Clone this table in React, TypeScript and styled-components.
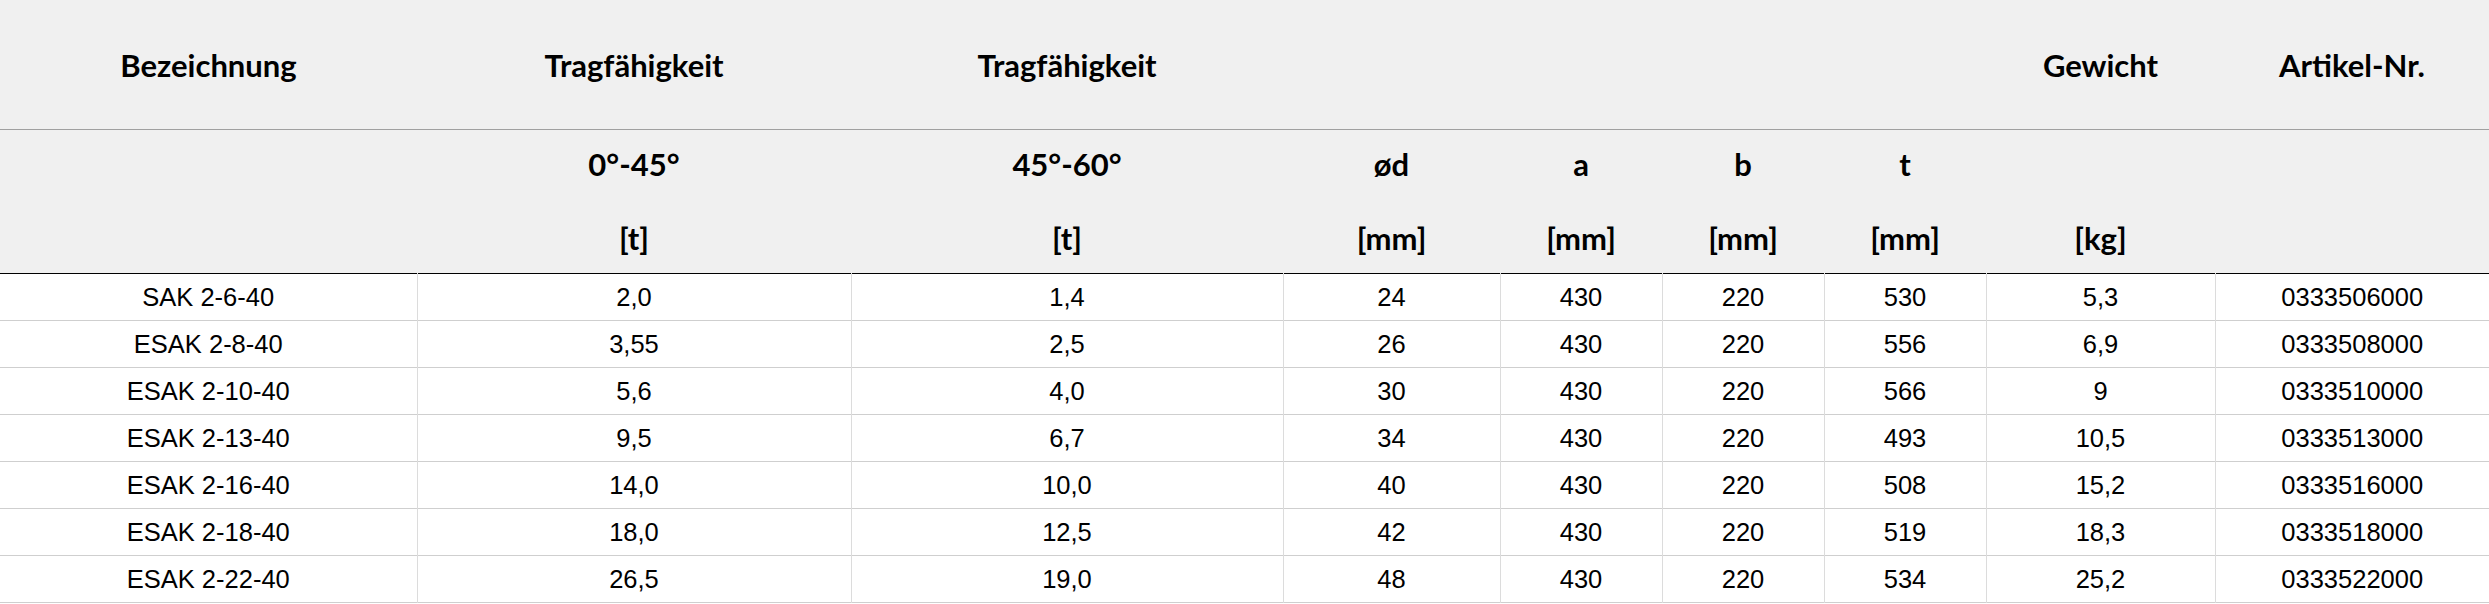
import * as React from 'react';
import styled, {createGlobalStyle} from "styled-components";

const GlobalStyle = createGlobalStyle`
    html, body {
        margin: 0;
        padding: 0;
        background: #ffffff;
    }
`;

interface Row {
    name: string;
    load1: string;
    load2: string;
    d: string;
    a: string;
    b: string;
    t: string;
    weight: string;
    article: string;
}

const rows: Row[] = [
    {name: 'SAK 2-6-40', load1: '2,0', load2: '1,4', d: '24', a: '430', b: '220', t: '530', weight: '5,3', article: '0333506000'},
    {name: 'ESAK 2-8-40', load1: '3,55', load2: '2,5', d: '26', a: '430', b: '220', t: '556', weight: '6,9', article: '0333508000'},
    {name: 'ESAK 2-10-40', load1: '5,6', load2: '4,0', d: '30', a: '430', b: '220', t: '566', weight: '9', article: '0333510000'},
    {name: 'ESAK 2-13-40', load1: '9,5', load2: '6,7', d: '34', a: '430', b: '220', t: '493', weight: '10,5', article: '0333513000'},
    {name: 'ESAK 2-16-40', load1: '14,0', load2: '10,0', d: '40', a: '430', b: '220', t: '508', weight: '15,2', article: '0333516000'},
    {name: 'ESAK 2-18-40', load1: '18,0', load2: '12,5', d: '42', a: '430', b: '220', t: '519', weight: '18,3', article: '0333518000'},
    {name: 'ESAK 2-22-40', load1: '26,5', load2: '19,0', d: '48', a: '430', b: '220', t: '534', weight: '25,2', article: '0333522000'},
];

// Spaltenbreiten in px
const widths = [417, 434, 432, 217, 162, 162, 162, 229, 274];

const titles = ['Bezeichnung', 'Tragfähigkeit', 'Tragfähigkeit', '', '', '', '', 'Gewicht', 'Artikel-Nr.'];

const subTitles: [string, string][] = [
    ['', ''],
    ['0°-45°', '[t]'],
    ['45°-60°', '[t]'],
    ['ød', '[mm]'],
    ['a', '[mm]'],
    ['b', '[mm]'],
    ['t', '[mm]'],
    ['', '[kg]'],
    ['', ''],
];

const App = () => {
    return <>
        <GlobalStyle/>
        <Table>
            <colgroup>
                {widths.map((w, i) => <col key={i} style={{width: w}}/>)}
            </colgroup>
            <thead>
            <TitleRow>
                {titles.map((title, i) => <TitleCell key={i}>{title}</TitleCell>)}
            </TitleRow>
            <UnitRow>
                {subTitles.map(([top, bottom], i) => <UnitCell key={i}>
                    <UnitStack>
                        <UnitLine>{top}</UnitLine>
                        <UnitLine>{bottom}</UnitLine>
                    </UnitStack>
                </UnitCell>)}
            </UnitRow>
            </thead>
            <tbody>
            {rows.map(row => <BodyRow key={row.article}>
                <Cell>{row.name}</Cell>
                <Cell>{row.load1}</Cell>
                <Cell>{row.load2}</Cell>
                <Cell>{row.d}</Cell>
                <Cell>{row.a}</Cell>
                <Cell>{row.b}</Cell>
                <Cell>{row.t}</Cell>
                <Cell>{row.weight}</Cell>
                <Cell>{row.article}</Cell>
            </BodyRow>)}
            </tbody>
        </Table>
    </>;
}

const Table = styled.table`
    width: 2489px;
    table-layout: fixed;
    border-collapse: collapse;
    border-spacing: 0;
`;

const TitleRow = styled.tr`
    background: #f0f0f0;
    border-bottom: 1px solid #a0a0a0;
`;

const TitleCell = styled.th`
    height: 129px;
    padding: 0;
    font-family: Lato, "Liberation Sans", sans-serif;
    font-weight: 700;
    font-size: 31px;
    color: #000;
    text-align: center;
    vertical-align: middle;
`;

const UnitRow = styled.tr`
    background: #f0f0f0;
    border-bottom: 1px solid #000;
`;

const UnitCell = styled.th`
    height: 144px;
    padding: 0 0 2px 0;
    box-sizing: border-box;
    font-family: Lato, "Liberation Sans", sans-serif;
    font-weight: 700;
    font-size: 31px;
    color: #000;
    text-align: center;
    vertical-align: middle;
`;

const UnitStack = styled.div`
    display: flex;
    flex-direction: column;
    align-items: center;
    gap: 36px;
`;

const UnitLine = styled.span`
    display: block;
    height: 38px;
    line-height: 38px;
`;

const BodyRow = styled.tr`
    border-bottom: 1px solid #cfcfcf;
`;

const Cell = styled.td`
    height: 46px;
    padding: 0;
    font-family: "Liberation Sans", Arial, sans-serif;
    font-size: 25.5px;
    color: #000;
    text-align: center;
    vertical-align: middle;
    border-left: 1px solid #dcdcdc;

    &:first-child {
        border-left: none;
    }
`;

export default App;
